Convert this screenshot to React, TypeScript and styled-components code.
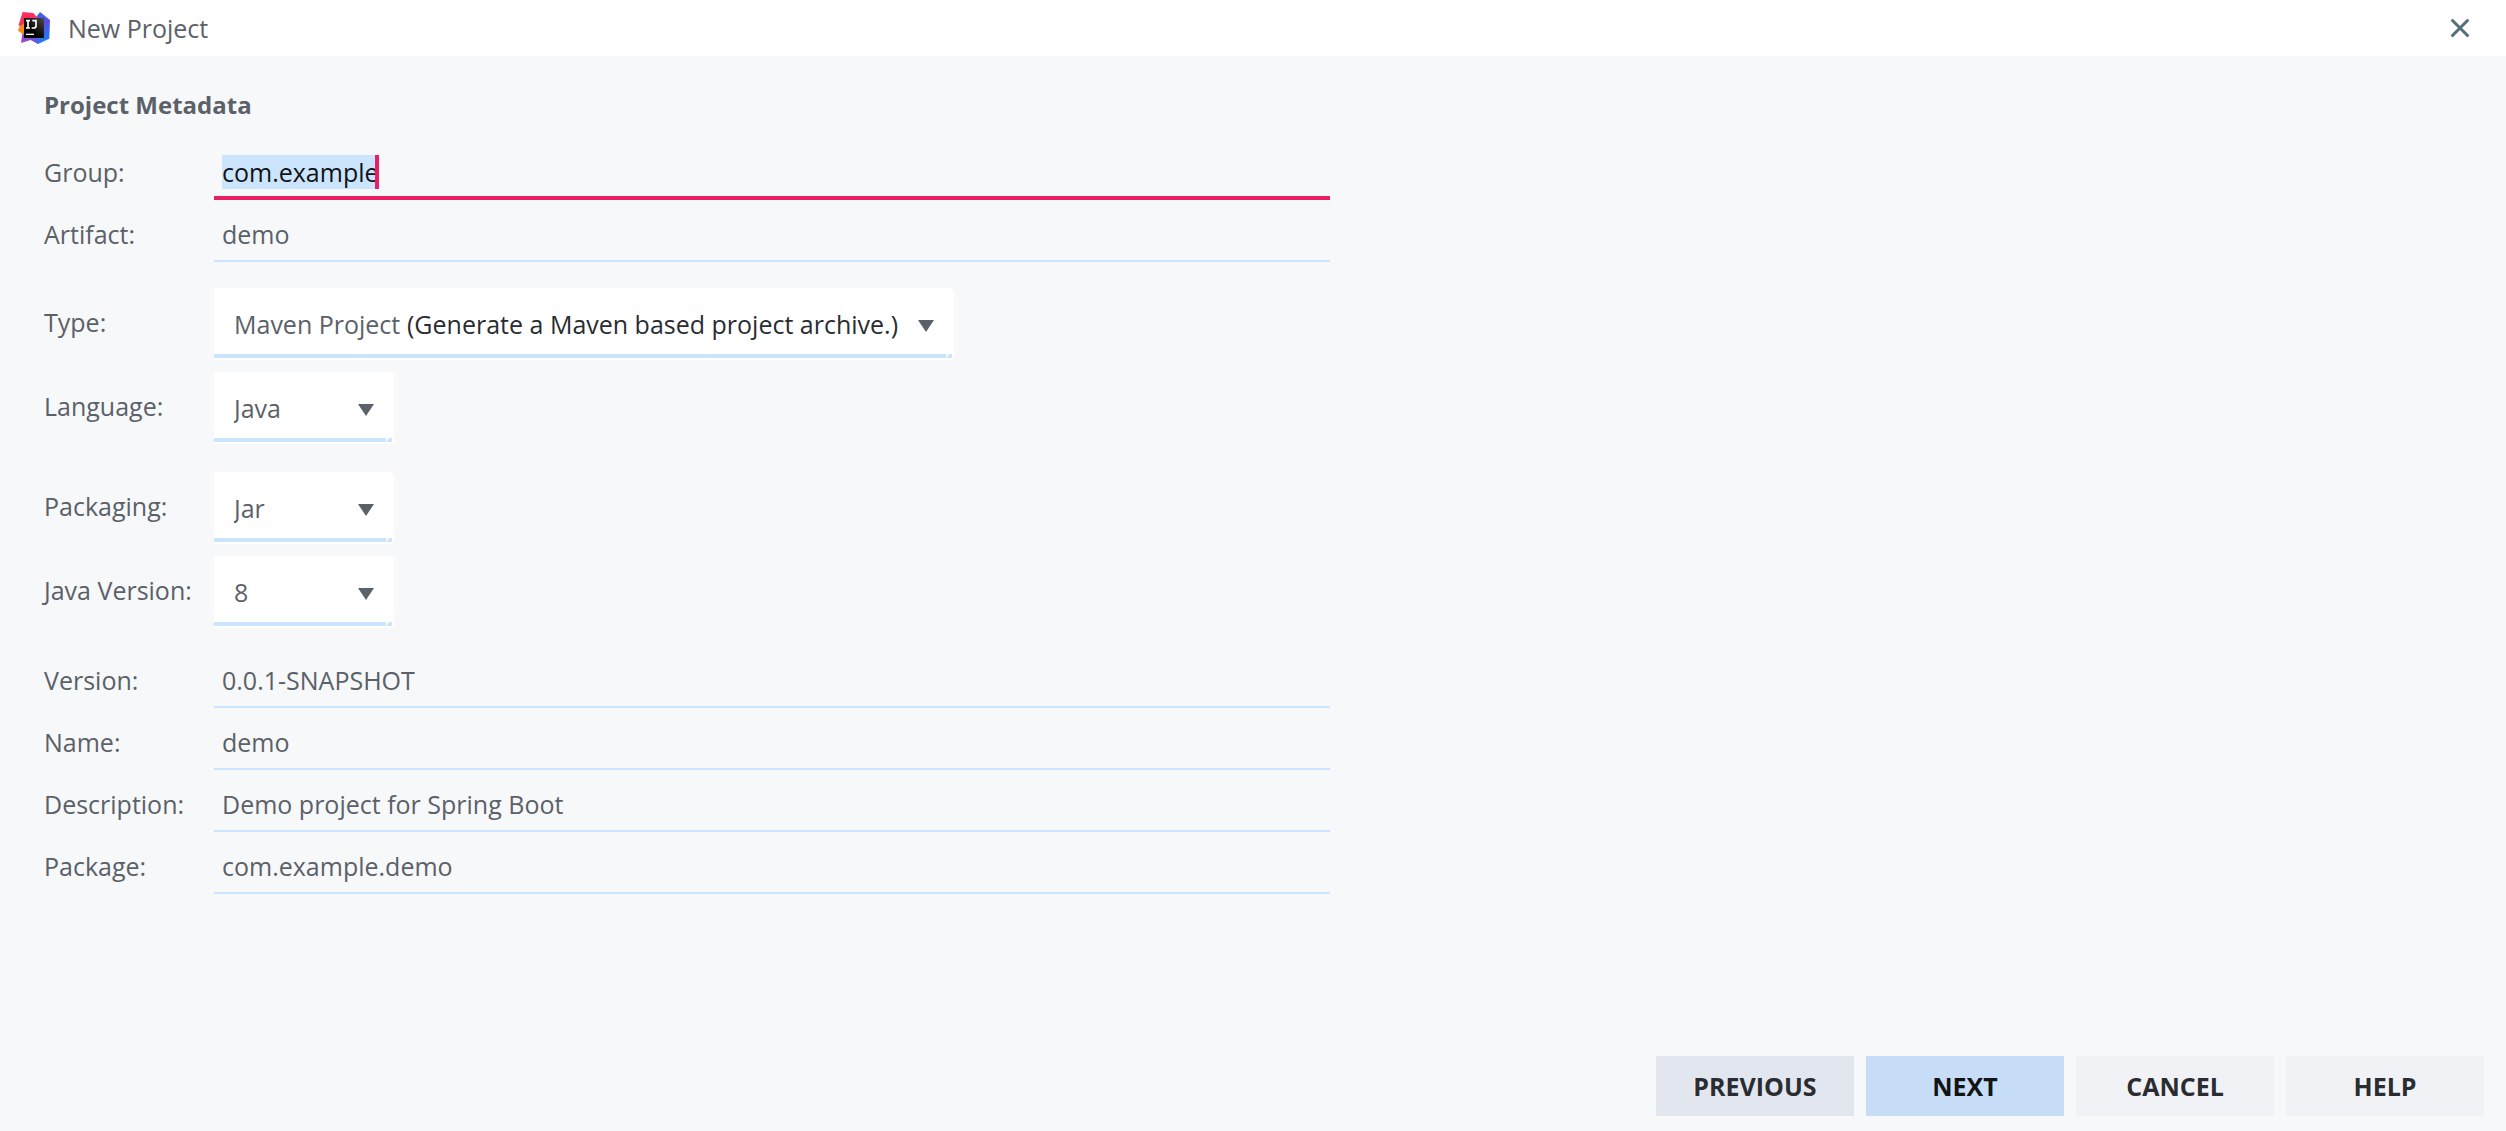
import React, { useEffect, useRef } from "react";
import styled, { createGlobalStyle } from "styled-components";

const c = {
  page: "#f7f8fa",
  text: "#5b6168",
  strong: "#292d31",
  line: "#cce5ff",
  accent: "#e91e63",
};

const GlobalStyle = createGlobalStyle`
  *, *::before, *::after { box-sizing: border-box; }
  body { margin: 0; background: ${c.page}; }
  body, input, select, button {
    font-family: "Open Sans", "Noto Sans", sans-serif;
    font-size: 25px;
    line-height: 34px;
    color: ${c.text};
  }
`;

const Dialog = styled.div`
  display: flex;
  flex-direction: column;
  min-height: 100vh;
`;

const TitleBar = styled.header`
  display: flex;
  align-items: center;
  gap: 18px;
  height: 56px;
  padding: 0 36px 0 18px;
  background: #fff;
`;

const Title = styled.h1`
  flex: 1;
  margin: 0;
  font-size: 25px;
  font-weight: 400;
`;

const CloseButton = styled.button`
  display: flex;
  padding: 0;
  border: 0;
  background: none;
  cursor: pointer;
`;

const Form = styled.form`
  display: flex;
  flex: 1;
  flex-direction: column;
  max-width: 1330px;
  padding: 32px 0 32px 44px;
`;

const Heading = styled.h2`
  margin: 0 0 16px;
  font-size: 24px;
  font-weight: 700;
`;

const Group = styled.div<{ $gap?: number; $after?: number }>`
  display: flex;
  flex-direction: column;
  gap: ${(p) => p.$gap ?? 0}px;
  margin-bottom: ${(p) => p.$after ?? 0}px;
`;

const Row = styled.div`
  display: grid;
  grid-template-columns: 170px minmax(0, 1fr);
`;

const Label = styled.label`
  padding-top: 17px;
  white-space: nowrap;
`;

const TextBox = styled.div<{ $active?: boolean }>`
  display: flex;
  align-items: flex-start;
  height: 62px;
  padding: 17px 8px 0;
  border-bottom: ${(p) => (p.$active ? `4px solid ${c.accent}` : `2px solid ${c.line}`)};
`;

const TextInput = styled.input<{ $active?: boolean }>`
  flex: ${(p) => (p.$active ? "none" : "1")};
  field-sizing: ${(p) => (p.$active ? "content" : "fixed")};
  min-width: 0;
  height: 34px;
  padding: 0;
  border: 0;
  outline: 0;
  background: none;
  &::selection {
    background: ${c.line};
    color: #111315;
  }
`;

const Caret = styled.span`
  width: 4px;
  height: 34px;
  margin-left: -4px;
  background: ${c.accent};
  z-index: 1;
`;

const SelectBox = styled.div`
  display: flex;
  justify-self: start;
  align-items: center;
  min-width: 180px;
  height: 72px;
  padding: 0 20px;
  background:
    linear-gradient(${c.page}, ${c.page}) right top / 2px 2px no-repeat,
    linear-gradient(${c.page}, ${c.page}) right bottom / 2px 2px no-repeat,
    radial-gradient(circle at 6px 5px, ${c.line} 5px, #fff 6px) right 2px bottom 2px / 6px 4px no-repeat,
    linear-gradient(${c.line}, ${c.line}) left 0 bottom 2px / calc(100% - 2px) 4px no-repeat,
    #fff;
`;

const Select = styled.select`
  flex: 1;
  appearance: none;
  height: 34px;
  padding: 0;
  border: 0;
  outline: 0;
  background: none;
`;

const Hint = styled.label`
  margin-left: 6px;
  color: ${c.strong};
  white-space: nowrap;
`;

const Arrow = styled.svg`
  flex: none;
  width: 16px;
  height: 16px;
  margin-left: 20px;
  fill: ${c.text};
  pointer-events: none;
`;

const Footer = styled.footer`
  display: flex;
  justify-content: flex-end;
  gap: 12px;
  padding: 0 22px 15px;
`;

const tones = {
  previous: ["#e2e6ee", c.strong],
  primary: ["#c6dcf7", "#111315"],
  plain: ["#f1f2f6", c.strong],
};

const Button = styled.button<{ $tone: keyof typeof tones }>`
  width: 198px;
  height: 60px;
  padding: 0;
  border: 0;
  background: ${(p) => tones[p.$tone][0]};
  color: ${(p) => tones[p.$tone][1]};
  font-weight: 700;
  text-transform: uppercase;
  cursor: pointer;
`;

function Logo() {
  return (
    <svg width="32" height="32" viewBox="0 0 96 96" aria-hidden="true">
      <defs>
        <linearGradient id="warm" x1="0" y1="0" x2="0" y2="1">
          <stop offset="0.4" stopColor="#ff2d5f" />
          <stop offset="0.6" stopColor="#f23a4d" />
          <stop offset="1" stopColor="#9b3fd0" />
        </linearGradient>
        <linearGradient id="cool" x1="0" y1="0" x2="0.2" y2="1">
          <stop offset="0" stopColor="#2f6fe8" />
          <stop offset="0.45" stopColor="#5b4fdc" />
          <stop offset="1" stopColor="#1f7cf5" />
        </linearGradient>
        <linearGradient id="violet" x1="0" y1="1" x2="1" y2="0.6">
          <stop offset="0" stopColor="#b03fc0" />
          <stop offset="1" stopColor="#5a5ae8" />
        </linearGradient>
        <linearGradient id="tile" x1="1" y1="0" x2="0.4" y2="0.7">
          <stop offset="0" stopColor="#4a4a4a" />
          <stop offset="1" stopColor="#000" />
        </linearGradient>
      </defs>
      <path d="M52 18 66 0 96 24 94 80 60 96 40 70Z" fill="url(#cool)" />
      <path d="M14 0 46 3 62 22 50 60 18 62 2 38Z" fill="url(#warm)" />
      <path d="M4 44 20 34 22 72 0 56Z" fill="#fb8a1e" />
      <path d="M13 66 40 60 60 78 60 96 38 84 9 93Z" fill="url(#violet)" />
      <path d="M18 18H78V78H18Z" fill="url(#tile)" />
      <path d="M24 26H36M30 26V48M24 48H36M43 26H54V42Q54 48 47 48H41" fill="none" stroke="#fff" strokeWidth="5" />
      <path d="M24 67H48" stroke="#fff" strokeWidth="4" />
    </svg>
  );
}

function TextRow({ id, label, value, active }: { id: string; label: string; value: string; active?: boolean }) {
  const input = useRef<HTMLInputElement>(null);
  useEffect(() => {
    if (active && input.current) {
      input.current.focus();
      input.current.select();
    }
  }, [active]);
  return (
    <Row>
      <Label htmlFor={id}>{label}</Label>
      <TextBox $active={active}>
        <TextInput id={id} ref={input} $active={active} defaultValue={value} spellCheck={false} />
        {active && <Caret />}
      </TextBox>
    </Row>
  );
}

function SelectRow({ id, label, value, hint }: { id: string; label: string; value: string; hint?: string }) {
  return (
    <Row>
      <Label htmlFor={id}>{label}</Label>
      <SelectBox>
        <Select id={id} defaultValue={value}>
          <option>{value}</option>
        </Select>
        {hint && <Hint htmlFor={id}>{hint}</Hint>}
        <Arrow viewBox="0 0 16 16">
          <path d="M0 4H16L8 16Z" />
        </Arrow>
      </SelectBox>
    </Row>
  );
}

export default function App() {
  return (
    <Dialog>
      <GlobalStyle />
      <TitleBar>
        <Logo />
        <Title>New Project</Title>
        <CloseButton type="button" aria-label="Close">
          <svg width="20" height="20" viewBox="0 0 20 20" stroke="#546e7a" strokeWidth="3" strokeLinecap="round">
            <path d="M2.5 2.5 17.5 17.5M17.5 2.5 2.5 17.5" />
          </svg>
        </CloseButton>
      </TitleBar>
      <Form id="metadata" onSubmit={(e) => e.preventDefault()}>
        <Heading>Project Metadata</Heading>
        <Group $after={26}>
          <TextRow id="group" label="Group:" value="com.example" active />
          <TextRow id="artifact" label="Artifact:" value="demo" />
        </Group>
        <Group $gap={12} $after={28}>
          <SelectRow id="type" label="Type:" value="Maven Project" hint="(Generate a Maven based project archive.)" />
          <SelectRow id="language" label="Language:" value="Java" />
        </Group>
        <Group $gap={12} $after={18}>
          <SelectRow id="packaging" label="Packaging:" value="Jar" />
          <SelectRow id="java-version" label="Java Version:" value="8" />
        </Group>
        <Group>
          <TextRow id="version" label="Version:" value="0.0.1-SNAPSHOT" />
          <TextRow id="name" label="Name:" value="demo" />
          <TextRow id="description" label="Description:" value="Demo project for Spring Boot" />
          <TextRow id="package" label="Package:" value="com.example.demo" />
        </Group>
      </Form>
      <Footer>
        <Button type="button" $tone="previous">Previous</Button>
        <Button type="submit" form="metadata" $tone="primary">Next</Button>
        <Button type="button" $tone="plain">Cancel</Button>
        <Button type="button" $tone="plain">Help</Button>
      </Footer>
    </Dialog>
  );
}
